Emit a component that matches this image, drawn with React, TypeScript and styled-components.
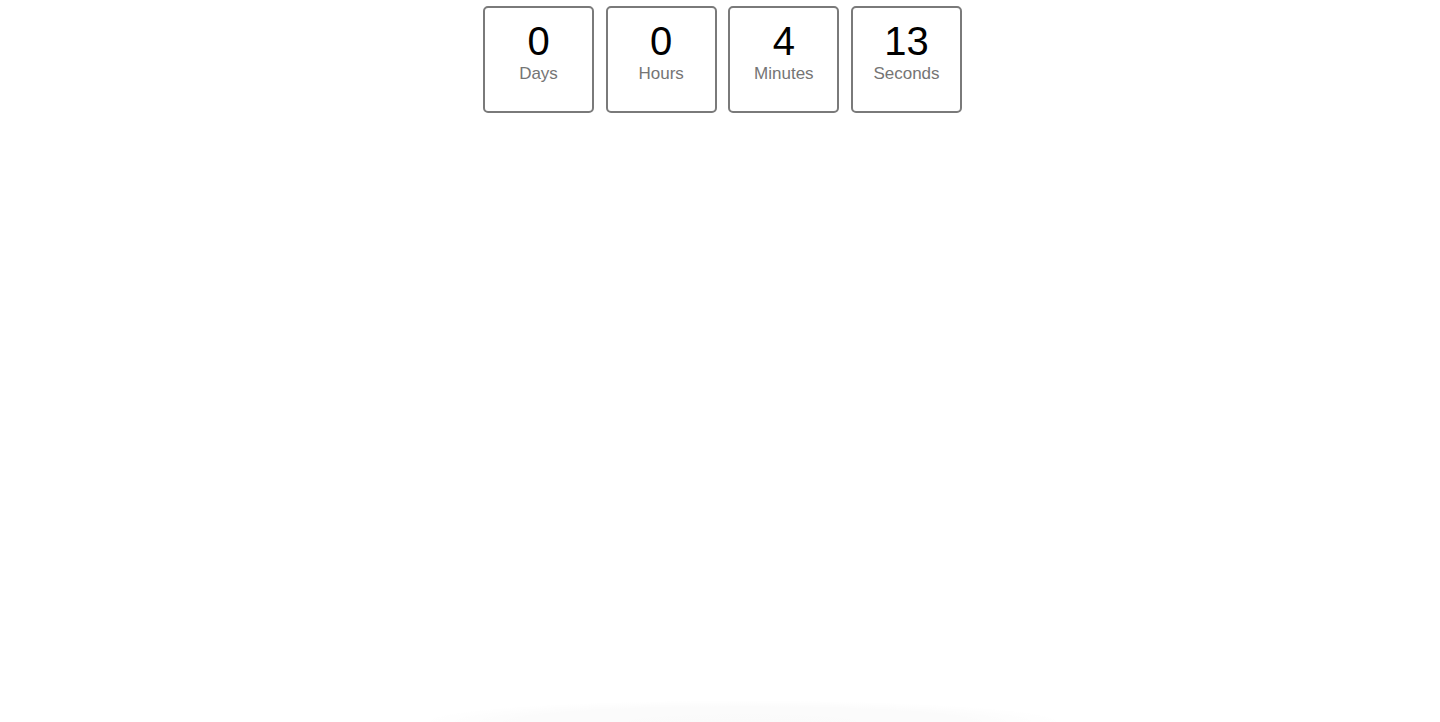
import styled, { createGlobalStyle } from "styled-components";

const GlobalStyle = createGlobalStyle`
  html, body {
    margin: 0;
    padding: 0;
    background: #ffffff;
  }
  body {
    font-family: "Liberation Sans", Arial, sans-serif;
  }
`;

const Page = styled.div`
  display: flex;
  flex-direction: column;
  align-items: center;
  min-height: 722px;
  box-sizing: border-box;
  padding-top: 6px;
`;

const Countdown = styled.div`
  display: flex;
  flex-direction: row;
  gap: 11.67px;
  padding-left: 5px;
`;

const Unit = styled.div`
  box-sizing: border-box;
  width: 111px;
  height: 107px;
  border: 2px solid #7a7a7a;
  border-radius: 5px;
  display: flex;
  flex-direction: column;
  align-items: center;
  padding-top: 13px;
`;

const Value = styled.div`
  font-size: 40px;
  line-height: 40px;
  color: #000000;
`;

const Label = styled.div`
  margin-top: 3px;
  font-size: 17px;
  line-height: 19px;
  color: #757575;
`;

const Glow = styled.div`
  margin-top: auto;
  width: 650px;
  height: 22px;
  margin-left: 46px;
  background: radial-gradient(
    ellipse 50% 100% at 50% 100%,
    rgba(0, 0, 0, 0.02) 0%,
    rgba(0, 0, 0, 0.017) 70%,
    rgba(0, 0, 0, 0) 100%
  );
`;

const units = [
  { value: 0, label: "Days" },
  { value: 0, label: "Hours" },
  { value: 4, label: "Minutes" },
  { value: 13, label: "Seconds" },
];

export default function App() {
  return (
    <>
      <GlobalStyle />
      <Page>
        <Countdown>
          {units.map((u) => (
            <Unit key={u.label}>
              <Value>{u.value}</Value>
              <Label>{u.label}</Label>
            </Unit>
          ))}
        </Countdown>
        <Glow />
      </Page>
    </>
  );
}
